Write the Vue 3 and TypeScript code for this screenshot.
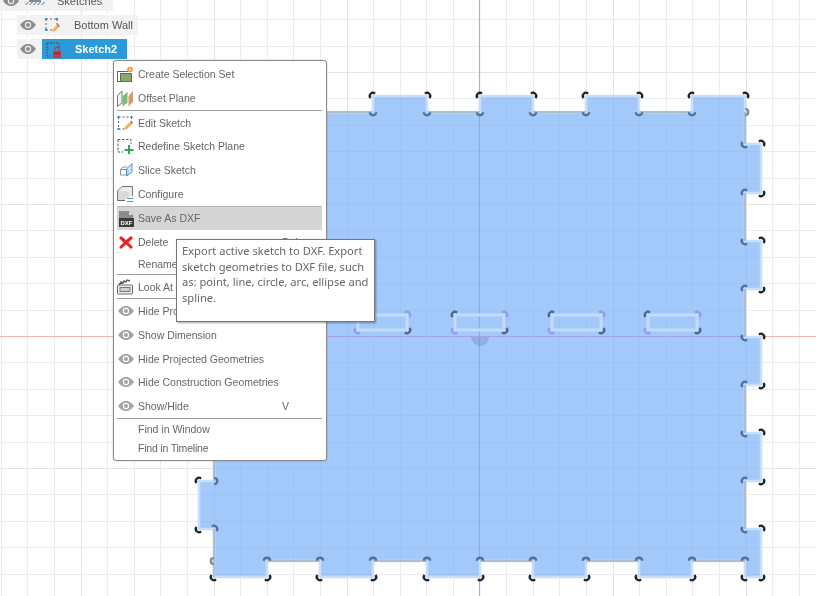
<script setup lang="ts">
type Row = { label: string; icon?: string; key?: string; h: number; active?: boolean; tight?: boolean };
type Item = Row | { sep: true };

const menu: Item[] = [
  { label: 'Create Selection Set', icon: 'set', h: 24 },
  { label: 'Offset Plane', icon: 'plane', h: 24 },
  { sep: true },
  { label: 'Edit Sketch', icon: 'edit', h: 23 },
  { label: 'Redefine Sketch Plane', icon: 'redefine', h: 24 },
  { label: 'Slice Sketch', icon: 'slice', h: 24 },
  { label: 'Configure', icon: 'configure', h: 24 },
  { label: 'Save As DXF', icon: 'dxf', h: 24, active: true },
  { label: 'Delete', icon: 'delete', key: 'Del', h: 24 },
  { label: 'Rename', h: 20 },
  { sep: true },
  { label: 'Look At', icon: 'look', h: 23 },
  { sep: true },
  { label: 'Hide Profile', icon: 'eye', h: 24 },
  { label: 'Show Dimension', icon: 'eye', h: 24 },
  { label: 'Hide Projected Geometries', icon: 'eye', h: 23 },
  { label: 'Hide Construction Geometries', icon: 'eye', h: 24 },
  { label: 'Show/Hide', icon: 'eye', key: 'V', h: 24 },
  { sep: true },
  { label: 'Find in Window', h: 19 },
  { label: 'Find in Timeline', h: 20, tight: true },
];
const isSep = (i: Item): i is { sep: true } => 'sep' in i;
const asRow = (i: Item) => i as Row;

const gridX: { p: number; major: boolean }[] = [];
for (let k = -18; k <= 13; k++) if (k !== 0) gridX.push({ p: Math.round(479.6 + k * 26.6) + 0.5, major: k % 5 === 0 });
const gridY: { p: number; major: boolean }[] = [];
for (let k = -12; k <= 10; k++) if (k !== 0) gridY.push({ p: Math.round(336 + k * 26.4) + 0.5, major: k % 5 === 0 });

const outline: [number, number][] = [
  [214, 112], [373, 112], [373, 96], [427, 96], [427, 112], [480, 112], [480, 96], [533, 96], [533, 112],
  [586, 112], [586, 96], [639, 96], [639, 112], [692, 112], [692, 96], [745, 96], [745, 144], [761, 144],
  [761, 193], [745, 193], [745, 241], [761, 241], [761, 289], [745, 289], [745, 337], [761, 337], [761, 385],
  [745, 385], [745, 433], [761, 433], [761, 481], [745, 481], [745, 529], [761, 529], [761, 577], [745, 577],
  [745, 561], [692, 561], [692, 577], [639, 577], [639, 561], [586, 561], [586, 577], [533, 577], [533, 561],
  [480, 561], [480, 577], [427, 577], [427, 561], [373, 561], [373, 577], [320, 577], [320, 561], [267, 561],
  [267, 577], [214, 577], [214, 529], [199, 529], [199, 481], [214, 481],
];
const shapePath = 'M' + outline.map((p) => p.join(' ')).join('L') + 'Z';

// Edges of the body that border the empty canvas carry a grey outer line.
const edgePath = [
  'M373 112H214', 'M427 112H480', 'M533 112H586', 'M639 112H692', 'M745 112V144', 'M745 193V241', 'M745 289V337',
  'M745 385V433', 'M745 481V529', 'M745 561H692', 'M639 561H586', 'M533 561H480', 'M427 561H373', 'M320 561H267',
  'M214 577V529', 'M214 481V440',
].join('');

const TL = 225, TR = 315, BR = 45, BL = 135, T = 270, B = 90, R = 0;
const k = '#1f2226', b = '#4f739f';
const marks: [number, number, number, string][] = [
  [373, 96, TL, k], [427, 96, TR, k], [480, 96, TL, k], [533, 96, TR, k], [586, 96, TL, k], [639, 96, TR, k],
  [692, 96, TL, k], [745, 96, TR, k], [373, 112, B, b], [427, 112, B, b], [480, 112, B, b], [533, 112, B, b],
  [586, 112, B, b], [639, 112, B, b], [692, 112, B, b], [745, 112, R, '#7d8a99'],
  [745, 144, BL, b], [761, 144, TR, k], [745, 193, TL, b], [761, 193, BR, k], [745, 241, BL, b], [761, 241, TR, k],
  [745, 289, TL, b], [761, 289, BR, k], [745, 337, BL, b], [761, 337, TR, k], [745, 385, TL, b], [761, 385, BR, k],
  [745, 433, BL, b], [761, 433, TR, k], [745, 481, TL, b], [761, 481, BR, k], [745, 529, BL, b], [761, 529, TR, k],
  [761, 577, BR, k], [745, 577, BL, k], [745, 561, T, b], [692, 561, T, b], [692, 577, BR, k], [639, 577, BL, k],
  [639, 561, T, b], [586, 561, T, b], [586, 577, BR, k], [533, 577, BL, k], [533, 561, T, b], [480, 561, T, b],
  [480, 577, BR, k], [427, 577, BL, k], [427, 561, T, b], [373, 561, T, b], [373, 577, BR, k], [320, 577, BL, k],
  [320, 561, T, b], [267, 561, T, b], [267, 577, BR, k], [214, 577, BL, k], [214, 561, 180, '#7d8a99'],
  [214, 529, TR, b], [199, 529, BL, k], [199, 481, TL, k], [214, 481, R, b],
];

const slots = [358, 455, 552, 648].map((x) => ({ x, y: 315, w: 49, h: 15 }));
const pale = '#8d9cf6', dark = '#47688f';
slots.forEach((s) => {
  marks.push([s.x, s.y, TL, dark], [s.x + s.w, s.y, TR, pale], [s.x, s.y + s.h, BL, pale], [s.x + s.w, s.y + s.h, BR, dark]);
});

function arc(x: number, y: number, dir: number): string {
  const r = 3.2;
  const rad = (d: number) => (d * Math.PI) / 180;
  const a0 = rad(dir - 85), a1 = rad(dir + 85);
  return `M${(x + r * Math.cos(a0)).toFixed(2)} ${(y + r * Math.sin(a0)).toFixed(2)}A${r} ${r} 0 0 1 ${(x + r * Math.cos(a1)).toFixed(2)} ${(y + r * Math.sin(a1)).toFixed(2)}`;
}
</script>

<template>
  <div class="stage">
    <svg class="canvas" width="816" height="596" viewBox="0 0 816 596">
      <line v-for="g in gridX" :key="'x' + g.p" :x1="g.p" :x2="g.p" y1="0" y2="596" :stroke="g.major ? '#e4e4e4' : '#ececec'" />
      <line v-for="g in gridY" :key="'y' + g.p" x1="0" x2="816" :y1="g.p" :y2="g.p" :stroke="g.major ? '#e4e4e4' : '#ececec'" />
      <line x1="0" x2="816" y1="336.5" y2="336.5" stroke="#f8b4b4" />
      <line x1="479.5" x2="479.5" y1="0" y2="596" stroke="#a9a9ff" stroke-width="1.200" />

      <path :d="shapePath" fill="rgba(124,176,248,.7)" />
      <path d="M479.5 112V577" stroke="#7fa5ff" opacity=".5" />
      <path d="M214 336.5H761" stroke="#a893e0" opacity=".45" />
      <path :d="shapePath" fill="none" stroke="#c8dffa" stroke-width="2.6" />
      <path :d="edgePath" fill="none" stroke="#aab4c2" stroke-width="1.6" />

      <rect v-for="s in slots" :key="s.x" :x="s.x" :y="s.y" :width="s.w" :height="s.h" fill="none" stroke="#c4dbfb" stroke-width="3" />
      <path d="M471 337A9 9 0 0 0 489 337Z" fill="#6f8fc0" opacity=".4" />

      <path v-for="(m, i) in marks" :key="i" :d="arc(m[0], m[1], m[2])" fill="none" :stroke="m[3]" stroke-width="2.300" />
    </svg>

    <div class="tree">
      <div class="node head">
        <svg class="eye" width="16" height="10" viewBox="0 0 16 10"><path d="M0 5C3 1 5.500 0 8 0s5 1 8 5c-3 4-5.500 5-8 5S3 9 0 5Z" fill="#8c8c8c" /><circle cx="8" cy="5" r="3.200" fill="#eee" /><circle cx="8" cy="5" r="2" fill="#8c8c8c" /></svg>
        <svg class="folder" width="20" height="10" viewBox="0 0 20 10"><rect x="4" width="12" height="6" fill="#8a8a8a" /><path d="M0 9 3 6h1l-3 3Zm4 0 3-3h1L5 9Zm4 0 3-3h1L9 9Zm4 0 3-3h1l-3 3Zm4 0 3-3h1l-3 3Z" fill="#4f6f95" /></svg>
        <span class="head-label">Sketches</span>
      </div>
      <div class="node wall">
        <svg class="eye" width="16" height="10" viewBox="0 0 16 10"><path d="M0 5C3 1 5.500 0 8 0s5 1 8 5c-3 4-5.500 5-8 5S3 9 0 5Z" fill="#8c8c8c" /><circle cx="8" cy="5" r="3.200" fill="#eee" /><circle cx="8" cy="5" r="2" fill="#8c8c8c" /></svg>
        <svg class="tree-icon" width="16" height="16" viewBox="0 0 16 16">
          <path d="M2 2H13M2 13H8M2 2V13M13 2V8" fill="none" stroke="#666" stroke-dasharray="2 2" />
          <path d="M1 1h2v2H1zM12 1h2v2h-2zM1 12h2v2H1z" fill="#2d8fd8" />
          <path d="M8 15l1-3 4-4 2 2-4 4Z" fill="#f0b050" /><path d="M13 8l1-1 2 2-1 1Z" fill="#e05050" />
        </svg>
        <span class="tree-label">Bottom Wall</span>
      </div>
      <div class="node sel">
        <span class="sel-eye">
          <svg class="eye" width="16" height="10" viewBox="0 0 16 10"><path d="M0 5C3 1 5.500 0 8 0s5 1 8 5c-3 4-5.500 5-8 5S3 9 0 5Z" fill="#8c8c8c" /><circle cx="8" cy="5" r="3.200" fill="#eee" /><circle cx="8" cy="5" r="2" fill="#8c8c8c" /></svg>
        </span>
        <span class="sel-body">
          <svg class="tree-icon" width="15" height="17" viewBox="0 0 15 17">
            <path d="M1 2H13V7M1 2V15H6" fill="none" stroke="#4a4f55" stroke-dasharray="2 1" />
            <path d="M7 10h8v7H7z" fill="#c23b4a" /><path d="M9 10V8a2 2 0 0 1 4 0v2" fill="none" stroke="#c23b4a" stroke-width="1.300" />
            <path d="M8 12.500h6" stroke="#8e2632" />
          </svg>
          <span class="tree-label strong">Sketch2</span>
        </span>
      </div>
    </div>

    <div class="menu">
      <template v-for="(item, i) in menu" :key="i">
        <div v-if="isSep(item)" class="sep"></div>
        <div v-else class="row" :class="{ active: asRow(item).active, tight: asRow(item).tight }" :style="{ height: asRow(item).h + 'px' }">
          <span class="ico">
            <svg v-if="asRow(item).icon === 'set'" width="17" height="17" viewBox="0 0 17 17">
              <path d="M0 5h11v1H1v9h3v1H0Z" fill="#3f7f4a" />
              <rect x="3.500" y="7.500" width="11" height="8" fill="#8aa86a" stroke="#55773f" />
              <circle cx="13" cy="3.500" r="2.800" fill="#ef9a3c" /><circle cx="13" cy="3.500" r="1" fill="#fff3d8" />
            </svg>
            <svg v-else-if="asRow(item).icon === 'plane'" width="17" height="17" viewBox="0 0 17 17">
              <path d="M.5 5.500 5 1V13L.5 16.500Z" fill="#f6f6f6" stroke="#777" />
              <path d="M5.500 6.500 10.500 1.500V12.500L5.500 16.500Z" fill="#7dbb83" />
              <path d="M11.500 6 16 1V12L11.500 16.500Z" fill="#d99a68" />
            </svg>
            <svg v-else-if="asRow(item).icon === 'edit'" width="17" height="16" viewBox="0 0 17 16">
              <path d="M1.500 2H14M1.500 14H8M1.500 2V14M14.500 2V7" fill="none" stroke="#555" stroke-dasharray="2 2" />
              <path d="M.5 1h2v2h-2zM13.500 1h2v2h-2zM.5 13h2v2h-2z" fill="#2d8fd8" />
              <path d="M7 15l1-3 5-5 2 2-5 5Z" fill="#f0b050" /><path d="M13 7l1-1 2 2-1 1Z" fill="#e05050" />
            </svg>
            <svg v-else-if="asRow(item).icon === 'redefine'" width="17" height="16" viewBox="0 0 17 16">
              <path d="M1 1.500H14V6M1 1.500V14H6" fill="none" stroke="#555" stroke-dasharray="2.500 1.500" />
              <path d="M11 7h2v4h3.500v2H13v3h-2v-3H7.500v-2H11Z" fill="#2fa84f" />
            </svg>
            <svg v-else-if="asRow(item).icon === 'slice'" width="16" height="16" viewBox="0 0 16 16">
              <path d="M2.500 7.500H10V13H2.500Z" fill="#fff" stroke="#8a949e" />
              <path d="M2.500 7.500 5 5H9" stroke="#8a949e" fill="none" />
              <path d="M8.500 7 14 1.500V10L8.500 14Z" fill="#b9d3ee" fill-opacity=".6" stroke="#5a93c8" />
            </svg>
            <svg v-else-if="asRow(item).icon === 'configure'" width="17" height="17" viewBox="0 0 17 17">
              <path d="M.5 14.500V5L5 .5H15.500V10" fill="#ececec" stroke="#777" />
              <path d="M1 5H10Q12 5 12 7V12H9V14.500H1Z" fill="#dadada" />
              <path d="M.5 14.500H8" stroke="#666" />
              <path d="M10 12.500H16M10 15.500H16" stroke="#5f8fb8" stroke-width="1.200" />
            </svg>
            <svg v-else-if="asRow(item).icon === 'dxf'" width="16" height="17" viewBox="0 0 16 17">
              <path d="M1 1h10l4 4v4H1Z" fill="#8b8b8b" />
              <path d="M11 1v4h4Z" fill="#d9d9d9" />
              <rect x="1" y="8" width="15" height="9" fill="#3a3a3a" />
              <text x="8.500" y="15" class="dxf-text" text-anchor="middle">DXF</text>
            </svg>
            <svg v-else-if="asRow(item).icon === 'delete'" width="16" height="16" viewBox="0 0 16 16">
              <path d="M3 2l5 4 5-4 2 2-4.500 4.500L15 13l-2 2-5-4.500L3 15l-2-2 4.500-4.500L1 4Z" fill="#e8262a" />
            </svg>
            <svg v-else-if="asRow(item).icon === 'look'" width="17" height="16" viewBox="0 0 17 16">
              <rect x=".5" y="6" width="15" height="9" rx="1" fill="#eee" stroke="#6a6a6a" />
              <rect x="3" y="8.500" width="10" height="4" fill="#cfcfcf" stroke="#777" />
              <path d="M2 6l2-3 2 1 1-2 2 1 1-2 3 1" fill="none" stroke="#5c5c5c" stroke-width="1.400" />
            </svg>
            <svg v-else-if="asRow(item).icon === 'eye'" width="16" height="10" viewBox="0 0 16 10"><path d="M0 5C3 1 5.500 0 8 0s5 1 8 5c-3 4-5.500 5-8 5S3 9 0 5Z" fill="#a3a3a3" /><circle cx="8" cy="5" r="3.200" fill="#fff" /><circle cx="8" cy="5" r="2" fill="#a3a3a3" /></svg>
          </span>
          <span class="label">{{ asRow(item).label }}</span>
          <span v-if="asRow(item).key" class="shortcut">{{ asRow(item).key }}</span>
        </div>
      </template>
    </div>

    <div class="tooltip">Export active sketch to DXF. Export sketch geometries to DXF file, such as: point, line, circle, arc, ellipse and spline.</div>
  </div>
</template>

<style scoped>
.stage {
  position: relative;
  width: 816px;
  height: 596px;
  overflow: hidden;
  background: #fff;
  filter: blur(0.35px);
  font-family: "Liberation Sans", Arial, sans-serif;
  color: #666;
}
.canvas {
  display: block;
}
.tree {
  position: absolute;
  left: 0;
  top: -10px;
  display: flex;
  flex-direction: column;
  align-items: flex-start;
  gap: 4px;
  font-size: 11px;
}
.node {
  display: flex;
  align-items: center;
  height: 21px;
  background: #f2f2f2;
}
.head {
  width: 113px;
  padding-left: 3px;
  box-sizing: border-box;
}
.head-label {
  margin-left: 12px;
  color: #555;
}
.folder {
  margin-left: 6px;
}
.wall {
  margin-left: 17px;
  width: 121px;
  height: 20px;
  padding-left: 3px;
  box-sizing: border-box;
}
.sel {
  margin-left: 17px;
  height: 20px;
}
.sel-eye {
  display: flex;
  align-items: center;
  width: 25px;
  padding-left: 3px;
  box-sizing: border-box;
}
.sel-body {
  display: flex;
  align-items: center;
  width: 85px;
  height: 20px;
  background: #2b9ad8;
  box-sizing: border-box;
  padding-left: 4px;
}
.wall .tree-icon {
  margin-left: 8px;
}
.tree-label {
  margin-left: 14px;
  color: #555;
}
.strong {
  color: #fff;
  font-weight: 700;
  margin-left: 14px;
}
.menu {
  position: absolute;
  left: 113px;
  top: 60px;
  width: 214px;
  height: 401px;
  box-sizing: border-box;
  padding: 1px 4px 0 3px;
  background: #fff;
  border: 1px solid #8a8a8a;
  border-radius: 3px;
  box-shadow: 0 0 2px rgba(0, 0, 0, 0.25);
  font-size: 10.5px;
}
.sep {
  height: 1px;
  background: #a0a0a0;
}
.row {
  position: relative;
  display: flex;
  align-items: center;
}
.row.tight {
  letter-spacing: -0.2px;
}
.row.active {
  background: #d5d5d5;
  box-shadow: inset 0 1px 0 #b8b8b8;
}
.ico {
  display: flex;
  align-items: center;
  justify-content: center;
  flex: 0 0 17px;
  margin-right: 4px;
}
.shortcut {
  position: absolute;
  left: 165px;
}
.dxf-text {
  font-family: "Liberation Sans", sans-serif;
  font-size: 6px;
  font-weight: 700;
  fill: #fff;
}
.tooltip {
  position: absolute;
  left: 176px;
  top: 239px;
  width: 199px;
  height: 83px;
  box-sizing: border-box;
  padding: 3px 5px;
  background: #fff;
  border: 1px solid #777;
  box-shadow: 1px 1px 2px rgba(0, 0, 0, 0.35);
  font-family: "Noto Sans", sans-serif;
  font-size: 11.13px;
  line-height: 15.7px;
  color: #666;
}
</style>
